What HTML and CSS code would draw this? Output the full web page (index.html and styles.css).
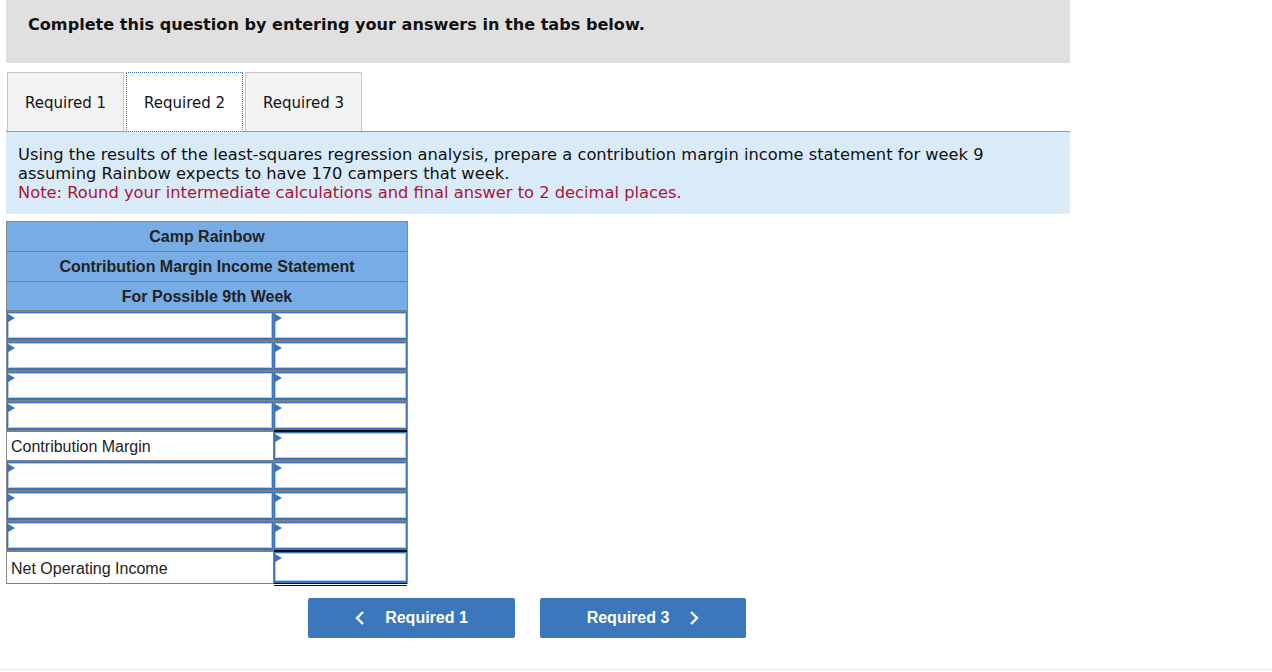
FILE: index.html
```html
<!DOCTYPE html>
<html>
<head>
<meta charset="utf-8">
<link rel="stylesheet" href="styles.css">
</head>
<body>
<div class="page">
  <div class="banner">Complete this question by entering your answers in the tabs below.</div>
  <div class="tabs">
    <div class="tab">Required 1</div>
    <div class="tab active">Required 2</div>
    <div class="tab">Required 3</div>
  </div>
  <div class="prompt">
    <div>Using the results of the least-squares regression analysis, prepare a contribution margin income statement for week 9 assuming Rainbow expects to have 170 campers that week.</div>
    <div class="note">Note: Round your intermediate calculations and final answer to 2 decimal places.</div>
  </div>
  <div class="stmt">
    <div class="hdr">Camp Rainbow</div>
    <div class="hdr">Contribution Margin Income Statement</div>
    <div class="hdr">For Possible 9th Week</div>
    <div class="row"><div class="inp"></div><div class="inp"></div></div>
    <div class="row"><div class="inp"></div><div class="inp"></div></div>
    <div class="row"><div class="inp"></div><div class="inp"></div></div>
    <div class="row"><div class="inp"></div><div class="inp"></div></div>
    <div class="row"><div class="label">Contribution Margin</div><div class="inp total"></div></div>
    <div class="row"><div class="inp"></div><div class="inp"></div></div>
    <div class="row"><div class="inp"></div><div class="inp"></div></div>
    <div class="row"><div class="inp"></div><div class="inp"></div></div>
    <div class="row last"><div class="label">Net Operating Income</div><div class="inp total double"></div></div>
  </div>
  <div class="nav">
    <div class="btn"><svg class="chev" width="10" height="16" viewBox="0 0 10 16"><polyline points="8,2 2,8 8,14" fill="none" stroke="#fff" stroke-width="2.4"/></svg><span>Required 1</span></div>
    <div class="btn next"><span>Required 3</span><svg class="chev" width="10" height="16" viewBox="0 0 10 16"><polyline points="2,2 8,8 2,14" fill="none" stroke="#fff" stroke-width="2.4"/></svg></div>
  </div>
</div>
<div class="footer"></div>
</body>
</html>
```
FILE: styles.css
```css
html, body { margin: 0; padding: 0; background: #fff; }
body { font-family: "DejaVu Sans", Verdana, sans-serif; color: #111; }
.page { padding-left: 6px; width: 1064px; height: 669px; }
.banner {
  height: 63px; background: #e0e0e0; box-sizing: border-box;
  padding: 15px 0 0 22px; font-weight: bold; font-size: 16.1px; color: #111;
}
.tabs { display: flex; margin-top: 9px; padding-left: 1px; height: 59px; border-bottom: 1px solid #999; box-sizing: content-box; }
.tab {
  width: 117px; height: 59px; box-sizing: border-box; background: #f3f3f3;
  border: 1px solid #c8c8c8; border-bottom: none; font-size: 15px; color: #111;
  display: flex; align-items: center; justify-content: center; margin-right: 2px; padding-top: 2px;
}
.tab.active { background: #fff; border: 1px dotted #2f6eb5; height: 60px; margin-bottom: -1px; }
.prompt {
  background: #d9ebf9; height: 82px; box-sizing: border-box;
  padding: 13px 60px 0 12px; font-size: 16.3px; line-height: 19px; color: #111;
}
.note { color: #ad1438; }
.stmt { width: 402px; margin-top: 7px; border: 1px solid #8a8a8a; border-bottom: none; box-sizing: border-box; }
.hdr {
  height: 30px; box-sizing: border-box; background: #78ace5; border-bottom: 1px solid #7f7f7f;
  text-align: center; line-height: 29px; font-family: "Liberation Sans", Arial, sans-serif;
  font-weight: bold; font-size: 16px; color: #222;
}
.hdr:nth-child(3) { border-bottom: 2px solid #7f7f7f; }
.row {
  display: grid; grid-template-columns: 266px 1fr; height: 30px; box-sizing: border-box;
  border-bottom: 2px solid #7f7f7f; column-gap: 1px; background: #7f7f7f;
}
.row.last { height: 32px; border-bottom: 1px solid #7f7f7f; }
.inp {
  position: relative; background: #fff; box-sizing: border-box;
  border: 1px solid #3c72b8; border-bottom-width: 2px; box-shadow: inset 0 0 0 1px #aecbf0;
}
.inp::before {
  content: ""; position: absolute; left: 0; top: 1px; width: 0; height: 0;
  border-top: 4px solid transparent; border-bottom: 4px solid transparent; border-left: 7px solid #3c72b8;
}
.label {
  background: #fff; font-family: "Liberation Sans", Arial, sans-serif; font-size: 16px;
  color: #222; padding: 2px 0 0 4px; box-sizing: border-box; overflow: hidden;
  display: flex; align-items: center;
}
.inp.total { border-top: 1px solid #3c72b8; box-shadow: inset 0 0 0 1px #aecbf0, 0 -2px 0 #111; }
.row.last .inp.total { border-bottom: 2px solid #3c72b8; }
.row.last .label { padding-top: 3px; }
.inp.double::after {
  content: ""; position: absolute; left: -1px; right: -1px; bottom: -5px; height: 1px;
  border-top: 1px solid #111; border-bottom: 1px solid #111;
}
.nav { display: flex; gap: 25px; margin: 14px 0 0 302px; }
.btn {
  width: 207px; height: 40px; background: #3a77bb; border-radius: 2px; color: #fff;
  display: flex; align-items: center; justify-content: center; gap: 20px;
  font-family: "Liberation Sans", Arial, sans-serif; font-weight: bold; font-size: 16px;
}
.btn.next { width: 206px; }
.chev { display: block; }
.footer { border-top: 1px solid #ececec; height: 2px; }
```
